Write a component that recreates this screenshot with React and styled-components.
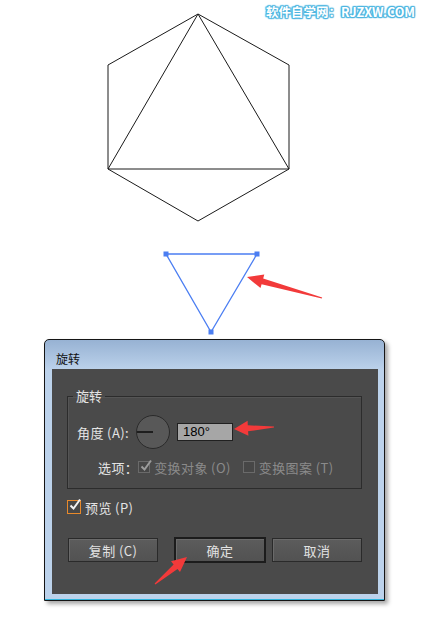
import React from 'react'
import styled, { createGlobalStyle } from 'styled-components'

const Global = createGlobalStyle`
  body {
    margin: 0;
    background: #fff;
    font-family: "Noto Sans CJK SC", "Liberation Sans", sans-serif;
  }
`

const Page = styled.div`
  position: relative;
  width: 421px;
  height: 617px;
  overflow: hidden;
  background: #fff;
`

const Canvas = styled.svg`
  display: block;
  width: 421px;
  height: 339px;
`

const Overlay = styled.svg`
  position: absolute;
  left: 0;
  top: 0;
  width: 421px;
  height: 617px;
  pointer-events: none;
`

const Watermark = styled.div`
  position: absolute;
  top: 3px;
  right: 6px;
  font-family: "Noto Sans CJK SC", "Liberation Sans", sans-serif;
  font-weight: 700;
  font-size: 12.5px;
  line-height: 18px;
  color: #fff;
  text-shadow:
    1px 0 1px #4fb6e0, -1px 0 1px #4fb6e0, 0 1px 1px #4fb6e0, 0 -1px 1px #4fb6e0,
    1px 1px 1px #4fb6e0, -1px -1px 1px #4fb6e0, 1px -1px 1px #4fb6e0, -1px 1px 1px #4fb6e0;
`

const Dialog = styled.div`
  box-sizing: border-box;
  margin-left: 44px;
  width: 341px;
  height: 262px;
  border: 1px solid #151515;
  border-radius: 5px 5px 0 0;
  background: linear-gradient(#97b2d3, #bcd2eb 30px, #bcd2eb);
  box-shadow: inset 0 -1px 0 #2fb4dc, 3px 3px 4px rgba(0, 0, 0, 0.35);
  display: flex;
  flex-direction: column;
  padding: 0 6px 6px 7px;
`

const TitleBar = styled.div`
  height: 29px;
  flex: none;
  display: flex;
  align-items: center;
  padding: 7px 0 0 4px;
  box-sizing: border-box;
  font-size: 12px;
  color: #111;
`

const Panel = styled.div`
  flex: 1;
  background: #4a4a4a;
  padding: 19px 16px 0 15px;
  display: flex;
  flex-direction: column;
  color: #e4e4e4;
  font-size: 13px;
`

const Group = styled.fieldset`
  margin: 0;
  padding: 0 10px 13px 5px;
  border: 1px solid #2c2c2c;
  box-shadow: 1px 1px 0 #555 inset;
`

const Legend = styled.legend`
  padding: 0 3px;
  font-size: 13px;
  line-height: 16px;
  color: #e4e4e4;
`

const Row = styled.div`
  display: flex;
  align-items: center;
  height: ${p => p.$h || 16}px;
  margin-top: ${p => p.$mt || 0}px;
  padding-left: ${p => p.$pl || 0}px;
  color: ${p => (p.$dim ? '#8a8a8a' : '#e4e4e4')};
`

const Label = styled.span`
  white-space: nowrap;
  letter-spacing: 0.4px;
  margin-right: ${p => p.$mr || 0}px;
  color: ${p => (p.$bright ? '#e4e4e4' : 'inherit')};
`

const Dial = styled.div`
  position: relative;
  width: 32px;
  height: 32px;
  border-radius: 50%;
  background: #585858;
  border: 1.5px solid #2a2a2a;
  margin-left: 7px;
  margin-right: 7px;
`

const Needle = styled.div`
  position: absolute;
  left: 0;
  top: 15px;
  width: 16px;
  height: 1.5px;
  background: #1e1e1e;
`

const NumberBox = styled.div`
  box-sizing: border-box;
  width: 56px;
  height: 18px;
  background: #a6a6a6;
  border: 1px solid #202020;
  color: #000;
  font-family: "Liberation Sans", sans-serif;
  font-size: 13px;
  line-height: 16px;
  padding-left: 5px;
`

const Box = styled.span`
  position: relative;
  box-sizing: border-box;
  width: ${p => p.$size}px;
  height: ${p => p.$size}px;
  border: 1px solid ${p => p.$border};
  background: #474747;
  margin-right: 4px;
  flex: none;
`

const Tick = styled.svg`
  position: absolute;
  left: 0;
  top: -3px;
  overflow: visible;
`

const ButtonRow = styled.div`
  display: flex;
  align-items: center;
  margin-top: 22px;
  padding-left: 1px;
`

const Button = styled.div`
  box-sizing: border-box;
  width: ${p => (p.$primary ? 92 : 90)}px;
  height: ${p => (p.$primary ? 26 : 24)}px;
  margin-left: ${p => p.$ml || 0}px;
  border: ${p => (p.$primary ? '2px solid #1c1c1c' : '1px solid #2a2a2a')};
  background: linear-gradient(#5c5c5c, #525252);
  box-shadow: inset 1px 1px 0 #6a6a6a;
  color: #e2e2e2;
  font-size: 13px;
  letter-spacing: 0.4px;
  display: flex;
  align-items: center;
  justify-content: center;
`

const CheckMark = ({ color, w = 2 }) => (
  <svg width="14" height="14" viewBox="0 0 14 14" style={{ overflow: 'visible' }}>
    <path d="M2.5 7.5 L5.5 10.5 L12 1.5" fill="none" stroke={color} strokeWidth={w} />
  </svg>
)

const Check = ({ size, border, mark, checked }) => (
  <Box $size={size} $border={border}>
    {checked && (
      <Tick width={size} height={size}>
        <CheckMark color={mark} />
      </Tick>
    )}
  </Box>
)

const arrow = (tip, tail, head = 15, barb = 7, shaft = 3) => {
  const dx = tail[0] - tip[0]
  const dy = tail[1] - tip[1]
  const len = Math.hypot(dx, dy)
  const ux = dx / len
  const uy = dy / len
  const nx = -uy
  const ny = ux
  const bx = tip[0] + ux * head
  const by = tip[1] + uy * head
  const pts = [
    tip,
    [bx + nx * barb, by + ny * barb],
    [bx + nx * shaft, by + ny * shaft],
    [tail[0] + nx * 0.6, tail[1] + ny * 0.6],
    [tail[0] - nx * 0.6, tail[1] - ny * 0.6],
    [bx - nx * shaft, by - ny * shaft],
    [bx - nx * barb, by - ny * barb],
  ]
  return pts.map(p => p.map(v => v.toFixed(1)).join(',')).join(' ')
}

const Handle = ({ x, y }) => <rect x={x - 2.5} y={y - 2.5} width="5" height="5" fill="#4b7ef2" />

const App = () => {
  const hex = '198,14 108,65 108,169 198,221 289,169 289,65'
  return (
    <Page>
      <Global />
      <Canvas viewBox="0 0 421 339">
        <polygon points={hex} fill="none" stroke="#1a1a1a" strokeWidth="1" />
        <polygon points="198,14 108,169 289,169" fill="none" stroke="#1a1a1a" strokeWidth="1" />
        <polygon points="166,254 257,254 211,332" fill="none" stroke="#4b7ef2" strokeWidth="1.3" />
        <Handle x={166} y={254} />
        <Handle x={257} y={254} />
        <Handle x={211} y={332} />
      </Canvas>
      <Watermark>软件自学网：RJZXW.COM</Watermark>

      <Dialog>
        <TitleBar>旋转</TitleBar>
        <Panel>
          <Group>
            <Legend>旋转</Legend>
            <Row $h={34} $mt={11} $pl={4}>
              <Label>角度 (A):</Label>
              <Dial>
                <Needle />
              </Dial>
              <NumberBox>180°</NumberBox>
            </Row>
            <Row $mt={10} $pl={25} $dim>
              <Label $bright>选项：</Label>
              <Check size={12} border="#6a6a6a" mark="#9c9c9c" checked />
              <Label $mr={12}>变换对象 (O)</Label>
              <Check size={12} border="#6a6a6a" />
              <Label>变换图案 (T)</Label>
            </Row>
          </Group>
          <Row $mt={10}>
            <Check size={14} border="#e8892a" mark="#f2f2f2" checked />
            <Label>预览 (P)</Label>
          </Row>
          <ButtonRow>
            <Button>复制 (C)</Button>
            <Button $primary $ml={16}>确定</Button>
            <Button $ml={6}>取消</Button>
          </ButtonRow>
        </Panel>
      </Dialog>

      <Overlay viewBox="0 0 421 617">
        <polygon points={arrow([247, 277], [322, 298], 16, 7, 3)} fill="#f23a3a" />
        <polygon points={arrow([234, 429], [274, 427], 14, 7.5, 3)} fill="#f23a3a" />
        <polygon points={arrow([187, 557], [155, 584], 15, 7, 3)} fill="#f23a3a" />
      </Overlay>
    </Page>
  )
}

export default App
